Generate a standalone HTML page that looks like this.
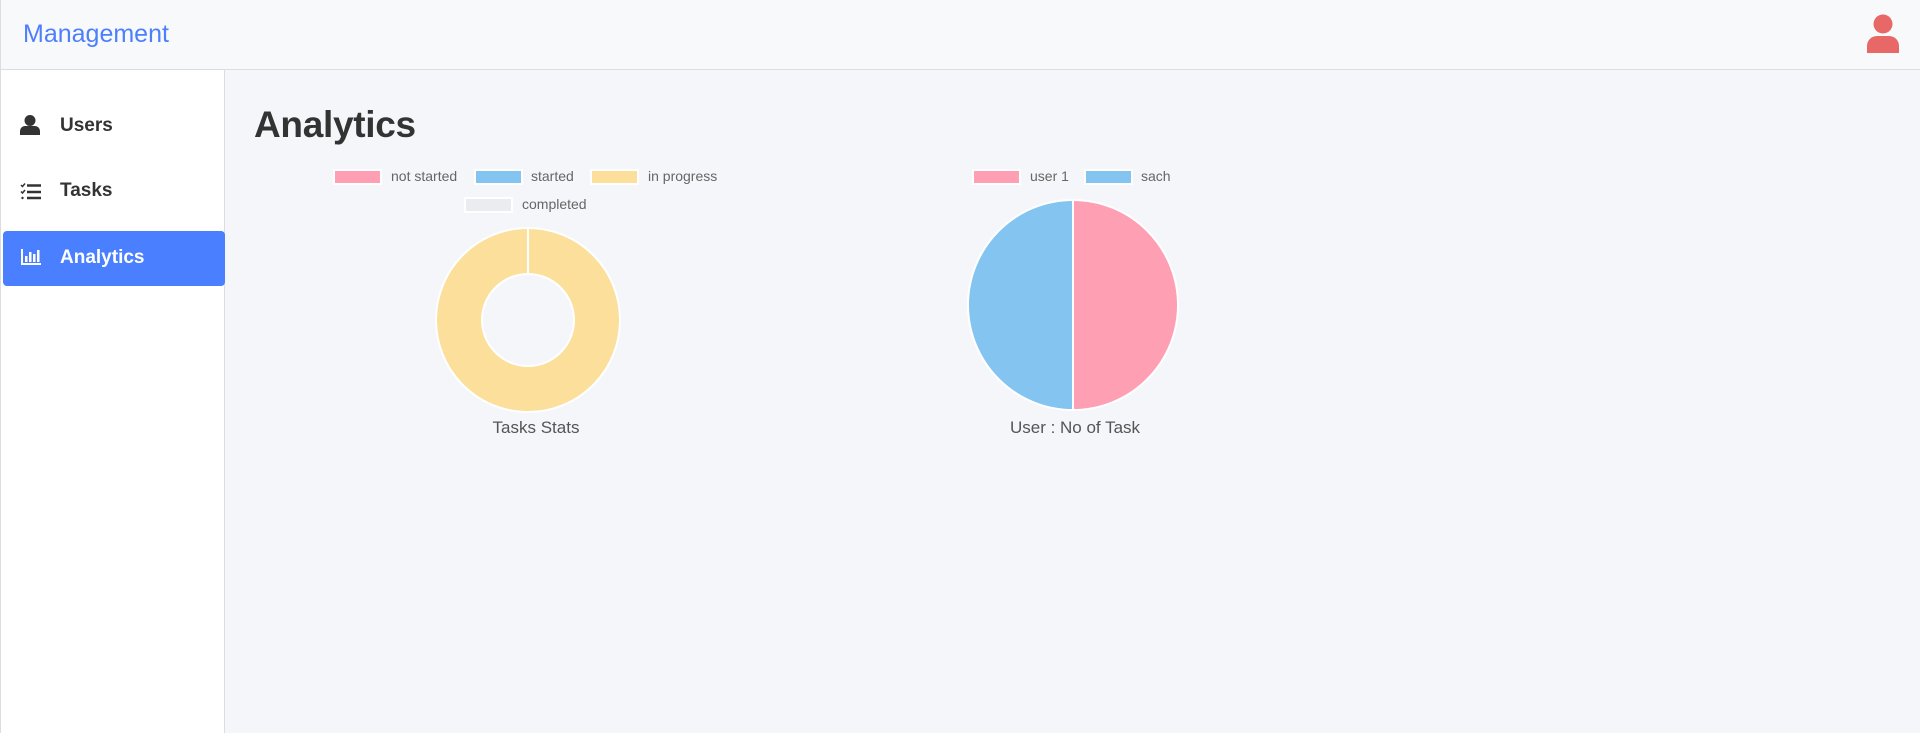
<!DOCTYPE html>
<html><head><meta charset="utf-8"><style>
*{margin:0;padding:0;box-sizing:border-box}
body{width:1920px;height:733px;overflow:hidden;background:#f4f6fa;font-family:"Liberation Sans",sans-serif;position:relative}
.hdr{position:absolute;left:0;top:0;width:1920px;height:70px;background:#f8f9fb;border-bottom:1px solid #dcdde0;border-left:1px solid #dcdde0}
.brand{position:absolute;left:22px;top:20px;font-size:25px;color:#4d7efc}
.side{position:absolute;left:0;top:70px;width:225px;height:663px;background:#fff;border-right:1px solid #dcdde0;border-left:1px solid #dcdde0}
.item{position:absolute;left:2px;width:222px;height:55px;font-size:19px;color:#333;font-weight:600}
.item span{position:absolute;left:57px;top:16px}
.act{background:#4a80ff;color:#fff;border-radius:4px}
svg{position:absolute;overflow:visible}
h1{position:absolute;left:254px;top:104px;font-size:37px;font-weight:600;color:#333;letter-spacing:-0.3px}
.lg{position:absolute;font-size:14px;color:#666}
.bx{position:absolute;width:49px;height:16px;border:2px solid #fff}
.cap{position:absolute;font-size:18px;color:#555;transform:translateX(-50%)}
</style></head><body>
<div class="hdr"><div class="brand">Management</div>
<svg style="left:1864px;top:14px" width="36" height="40"><circle cx="18" cy="10" r="9.5" fill="#e86868"/><path d="M2 39 V32 A10 10 0 0 1 12 22 H24 A10 10 0 0 1 34 32 V39 Z" fill="#e86868"/></svg></div>
<div class="side">
<div class="item" style="top:29px"><svg style="left:17px;top:16px" width="20" height="20"><circle cx="10" cy="5.5" r="5.5" fill="#333"/><path d="M0 20 V16 A5 5 0 0 1 5 11 H15 A5 5 0 0 1 20 16 V20 Z" fill="#333"/></svg><span>Users</span></div>
<div class="item" style="top:94px"><svg style="left:18px;top:19px" width="20" height="17" stroke="#333" stroke-width="2.5" fill="none"><path d="M6 2.5H20M6 9H20M6 15H20"/><path d="M0 2 L1.5 3.5 L4 0.5M0 8.5 L1.5 10 L4 7" stroke-width="1.5"/><circle cx="1.5" cy="15" r="1.2" fill="#333" stroke="none"/></svg><span>Tasks</span></div>
<div class="item act" style="top:161px"><svg style="left:18px;top:18px" width="20" height="16" fill="#fff"><rect x="0" y="0" width="2" height="16"/><rect x="0" y="14" width="20" height="2"/><rect x="4" y="7" width="2.5" height="6"/><rect x="8" y="3" width="2.5" height="10"/><rect x="12" y="5" width="2.5" height="8"/><rect x="16" y="1" width="2.5" height="12"/></svg><span>Analytics</span></div>
</div>
<h1>Analytics</h1>
<div class="bx" style="left:333px;top:169px;background:#ff9fb3"></div><div class="lg" style="left:391px;top:168px">not started</div>
<div class="bx" style="left:474px;top:169px;background:#84c4f0"></div><div class="lg" style="left:531px;top:168px">started</div>
<div class="bx" style="left:590px;top:169px;background:#fbdf9b"></div><div class="lg" style="left:648px;top:168px">in progress</div>
<div class="bx" style="left:464px;top:197px;background:#ebecef"></div><div class="lg" style="left:522px;top:196px">completed</div>
<svg style="left:0;top:0" width="1920" height="733">
<circle cx="528" cy="320" r="69" fill="none" stroke="#fbdf9b" stroke-width="46"/>
<circle cx="528" cy="320" r="92" fill="none" stroke="#fff" stroke-width="2"/>
<circle cx="528" cy="320" r="46" fill="none" stroke="#fff" stroke-width="2"/>
<line x1="528" y1="228" x2="528" y2="274" stroke="#fff" stroke-width="2"/>
<path d="M1073 200 A105 105 0 0 1 1073 410 Z" fill="#ff9fb3"/>
<path d="M1073 200 A105 105 0 0 0 1073 410 Z" fill="#84c4f0"/>
<circle cx="1073" cy="305" r="105" fill="none" stroke="#fff" stroke-width="2"/>
<line x1="1073" y1="200" x2="1073" y2="410" stroke="#fff" stroke-width="2"/>
</svg>
<div class="bx" style="left:972px;top:169px;background:#ff9fb3"></div><div class="lg" style="left:1030px;top:168px">user 1</div>
<div class="bx" style="left:1084px;top:169px;background:#84c4f0"></div><div class="lg" style="left:1141px;top:168px">sach</div>
<div class="cap" style="left:536px;top:418px;font-size:17px">Tasks Stats</div>
<div class="cap" style="left:1075px;top:418px;font-size:17px">User : No of Task</div>
</body></html>
